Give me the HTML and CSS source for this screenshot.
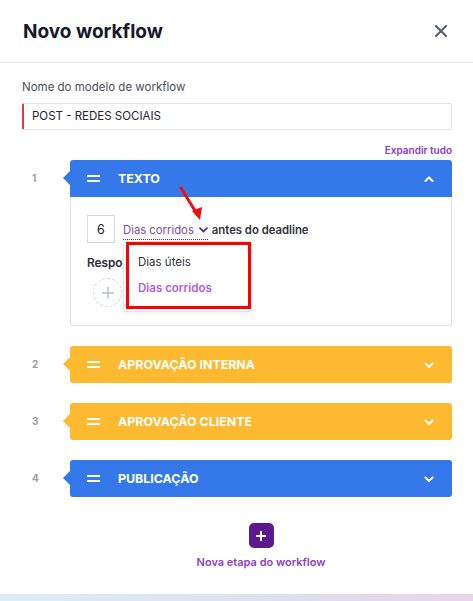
FILE: index.html
```html
<!DOCTYPE html>
<html lang="pt">
<head>
  <meta charset="UTF-8" />
  <meta name="viewport" content="width=device-width, initial-scale=1.0"/>
  <title>Novo workflow</title>
  <link rel="stylesheet" href="styles.css">
</head>
<body>
  <div class="modal">
    <header class="modal-header">
      <h1>Novo workflow</h1>
      <button class="close" aria-label="Fechar">
        <svg width="12" height="12" viewBox="0 0 12 12"><path d="M1 1L11 11M11 1L1 11" stroke="#59606e" stroke-width="2.2" stroke-linecap="round"/></svg>
      </button>
    </header>

    <div class="modal-body">
      <label class="field-label">Nome do modelo de workflow</label>
      <div class="name-input">POST - REDES SOCIAIS</div>

      <div class="expand"><a href="#">Expandir tudo</a></div>

      <!-- Step 1 (open) -->
      <div class="step">
        <span class="step-num">1</span>
        <div class="step-main">
          <div class="step-bar blue open">
            <span class="handle"></span>
            <span class="step-title">TEXTO</span>
            <svg class="chev" width="10" height="6" viewBox="0 0 10 6"><path d="M1.5 5L5 1.5L8.5 5" stroke="#fff" stroke-width="2" fill="none" stroke-linecap="round"/></svg>
          </div>
          <div class="step-content">
            <div class="deadline">
              <span class="days-box">6</span>
              <span class="days-select">Dias corridos
                <svg width="9" height="6" viewBox="0 0 9 6"><path d="M1 1.2L4.5 4.5L8 1.2" stroke="#5b2a86" stroke-width="1.8" fill="none" stroke-linecap="round"/></svg>
              </span>
              <span class="deadline-text">antes do deadline</span>
            </div>
            <div class="resp-label">Responsável</div>
            <span class="add-person">
              <svg width="14" height="14" viewBox="0 0 14 14"><path d="M7 1V13M1 7H13" stroke="#b8bdc6" stroke-width="1.4"/></svg>
            </span>

            <div class="dropdown">
              <div class="dropdown-mark">
                <div class="option">Dias úteis</div>
                <div class="option active">Dias corridos</div>
              </div>
            </div>
            <svg class="pointer-arrow" width="30" height="40" viewBox="0 0 30 40">
              <line x1="3" y1="2" x2="19" y2="28" stroke="#f20d0d" stroke-width="3" stroke-linecap="round"/>
              <polygon points="14,25 24,21 22,34" fill="#f20d0d"/>
            </svg>
          </div>
        </div>
      </div>

      <div class="step">
        <span class="step-num">2</span>
        <div class="step-main">
          <div class="step-bar orange">
            <span class="handle"></span>
            <span class="step-title">APROVAÇÃO INTERNA</span>
            <svg class="chev" width="10" height="6" viewBox="0 0 10 6"><path d="M1.5 1.5L5 5L8.5 1.5" stroke="#fff" stroke-width="2" fill="none" stroke-linecap="round"/></svg>
          </div>
        </div>
      </div>

      <div class="step">
        <span class="step-num">3</span>
        <div class="step-main">
          <div class="step-bar orange">
            <span class="handle"></span>
            <span class="step-title">APROVAÇÃO CLIENTE</span>
            <svg class="chev" width="10" height="6" viewBox="0 0 10 6"><path d="M1.5 1.5L5 5L8.5 1.5" stroke="#fff" stroke-width="2" fill="none" stroke-linecap="round"/></svg>
          </div>
        </div>
      </div>

      <div class="step">
        <span class="step-num">4</span>
        <div class="step-main">
          <div class="step-bar blue">
            <span class="handle"></span>
            <span class="step-title">PUBLICAÇÃO</span>
            <svg class="chev" width="10" height="6" viewBox="0 0 10 6"><path d="M1.5 1.5L5 5L8.5 1.5" stroke="#fff" stroke-width="2" fill="none" stroke-linecap="round"/></svg>
          </div>
        </div>
      </div>

      <div class="new-step">
        <button class="new-step-btn">
          <svg width="12" height="12" viewBox="0 0 12 12"><path d="M6 1V11M1 6H11" stroke="#fff" stroke-width="2"/></svg>
        </button>
        <span class="new-step-text">Nova etapa do workflow</span>
      </div>
    </div>
    <div class="footer-strip"></div>
  </div>
</body>
</html>
```

FILE: styles.css
```css
body {
  margin: 0;
  background: #fff;
  font-family: 'Inter', 'Noto Sans', sans-serif;
  color: #2b2f38;
}

.modal {
  width: 473px;
  height: 601px;
  display: flex;
  flex-direction: column;
  overflow: hidden;
}

.modal-header {
  height: 63px;
  display: flex;
  align-items: center;
  justify-content: space-between;
  padding: 0 26px 0 23px;
  border-bottom: 1px solid #e2e4e9;
  box-sizing: border-box;
}

.modal-header h1 {
  margin: 0;
  font-size: 19px;
  font-weight: 700;
  color: #16192b;
}

.close {
  border: none;
  background: none;
  padding: 0;
  display: flex;
  cursor: pointer;
}

.modal-body {
  flex: 1;
  padding: 17px 21px 0 22px;
}

.field-label {
  display: block;
  font-size: 11.5px;
  color: #4a4e57;
  margin-bottom: 9px;
}

.name-input {
  height: 27px;
  box-sizing: border-box;
  border: 1px solid #e1e3e8;
  border-left: 2px solid #e8383d;
  border-radius: 2px;
  padding-left: 8px;
  font-size: 11.5px;
  line-height: 25px;
  color: #23262e;
}

.expand {
  text-align: right;
  margin-top: 11px;
  margin-bottom: 5px;
  height: 14px;
  line-height: 14px;
}

.expand a {
  font-size: 10px;
  font-weight: 600;
  color: #8e3ad0;
  text-decoration: none;
}

.step {
  display: flex;
  align-items: flex-start;
  margin-bottom: 20px;
}

.step-num {
  width: 48px;
  box-sizing: border-box;
  padding-left: 10px;
  line-height: 37px;
  font-size: 10px;
  font-weight: 700;
  color: #9a9da3;
}

.step-main {
  flex: 1;
}

.step-bar {
  position: relative;
  height: 37px;
  border-radius: 3px;
  display: flex;
  align-items: center;
  padding: 0 18px 0 17px;
  color: #fff;
}

.step-bar.open {
  border-radius: 3px 3px 0 0;
}

.step-bar::before {
  content: '';
  position: absolute;
  left: -7px;
  top: 11px;
  border-top: 7px solid transparent;
  border-bottom: 7px solid transparent;
  border-right: 7px solid;
  border-right-color: inherit;
}

.blue {
  background: #3578ea;
  border-color: #3578ea;
}

.orange {
  background: #fdb92f;
  border-color: #fdb92f;
}

.handle {
  width: 13px;
  height: 7px;
  border-top: 2px solid #fff;
  border-bottom: 2px solid #fff;
  box-sizing: border-box;
  margin-right: 18px;
}

.step-title {
  flex: 1;
  font-size: 12.4px;
  font-weight: 700;
}

.step-content {
  position: relative;
  height: 129px;
  border: 1px solid #dde1e7;
  border-top: none;
  border-radius: 0 0 3px 3px;
  padding: 18px 16px 0 16px;
  box-sizing: border-box;
}

.deadline {
  display: flex;
  align-items: center;
  font-size: 11.3px;
}

.days-box {
  width: 28px;
  height: 28px;
  box-sizing: border-box;
  border: 1px solid #d6d9df;
  display: flex;
  align-items: center;
  justify-content: center;
  font-size: 12.5px;
  color: #1e2129;
  margin-right: 8px;
}

.days-select {
  color: #7a4ca6;
  border-bottom: 1px dotted #5b2a86;
  padding-bottom: 2px;
  margin-top: 5px;
  display: flex;
  align-items: center;
  gap: 5px;
}

.deadline-text {
  font-weight: 600;
  color: #30333b;
  margin-left: 4px;
  margin-top: 1px;
}

.resp-label {
  margin-top: 13px;
  font-size: 11.8px;
  font-weight: 600;
  color: #2b2e36;
}

.add-person {
  margin: 8px 0 0 6px;
  width: 29px;
  height: 29px;
  box-sizing: border-box;
  border: 1.5px dashed #d4d8df;
  border-radius: 50%;
  display: flex;
  align-items: center;
  justify-content: center;
}

.dropdown {
  position: absolute;
  left: 52px;
  top: 44px;
  width: 129px;
  height: 71px;
  box-sizing: border-box;
  background: #fff;
  border: 1px solid #e3e5ea;
  border-radius: 3px;
  box-shadow: 0 2px 4px rgba(0,0,0,0.06);
}

.dropdown-mark {
  margin: 0 0 0 2px;
  height: 67px;
  box-sizing: border-box;
  border: 3px solid #ff0000;
  padding: 4px 0 0 9px;
}

.option {
  font-size: 11.5px;
  line-height: 26px;
  color: #2e3138;
}

.option.active {
  color: #b35de6;
  font-weight: 600;
}

.pointer-arrow {
  position: absolute;
  left: 107px;
  top: -11px;
}

.new-step {
  display: flex;
  flex-direction: column;
  align-items: center;
  margin: 26px 0 0 48px;
}

.new-step-btn {
  width: 25px;
  height: 25px;
  border: none;
  border-radius: 5px;
  background: #5c1a8e;
  display: flex;
  align-items: center;
  justify-content: center;
  padding: 0;
}

.new-step-text {
  margin-top: 7px;
  font-size: 11px;
  font-weight: 600;
  color: #8e3fcc;
}

.footer-strip {
  height: 7px;
  background: linear-gradient(90deg, #dcedf3, #dde1ee 55%, #e7d4e8);
}
```
